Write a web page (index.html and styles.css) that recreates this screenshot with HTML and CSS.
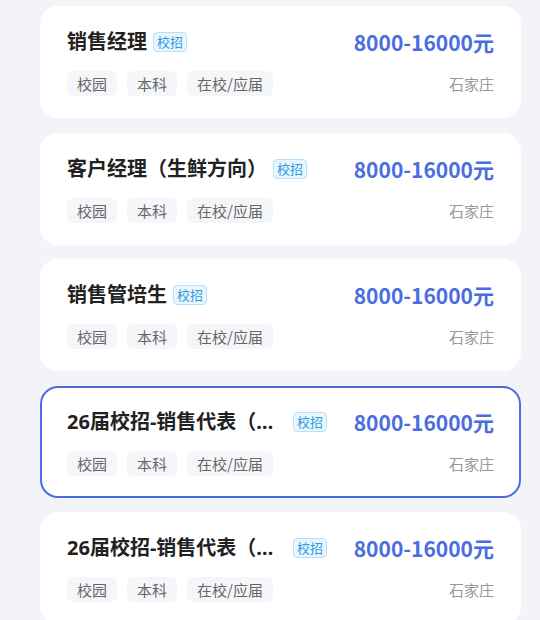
FILE: index.html
```html
<!DOCTYPE html>
<html lang="zh-CN">
<head>
    <meta charset="UTF-8">
    <meta name="viewport" content="width=device-width, initial-scale=1.0">
    <title>职位列表</title>
    <link rel="stylesheet" href="styles.css">
</head>
<body>
    <div class="list">
        <div class="job">
            <div class="row">
                <div class="name"><span class="title">销售经理</span><span class="badge">校招</span></div>
                <span class="salary">8000-16000元</span>
            </div>
            <div class="row">
                <div class="tags"><span class="tag">校园</span><span class="tag">本科</span><span class="tag">在校/应届</span></div>
                <span class="city">石家庄</span>
            </div>
        </div>
        <div class="job">
            <div class="row">
                <div class="name"><span class="title">客户经理（生鲜方向）</span><span class="badge">校招</span></div>
                <span class="salary">8000-16000元</span>
            </div>
            <div class="row">
                <div class="tags"><span class="tag">校园</span><span class="tag">本科</span><span class="tag">在校/应届</span></div>
                <span class="city">石家庄</span>
            </div>
        </div>
        <div class="job">
            <div class="row">
                <div class="name"><span class="title">销售管培生</span><span class="badge">校招</span></div>
                <span class="salary">8000-16000元</span>
            </div>
            <div class="row">
                <div class="tags"><span class="tag">校园</span><span class="tag">本科</span><span class="tag">在校/应届</span></div>
                <span class="city">石家庄</span>
            </div>
        </div>
        <div class="job active">
            <div class="row">
                <div class="name"><span class="title">26届校招-销售代表（生鲜方向）</span><span class="badge">校招</span></div>
                <span class="salary">8000-16000元</span>
            </div>
            <div class="row">
                <div class="tags"><span class="tag">校园</span><span class="tag">本科</span><span class="tag">在校/应届</span></div>
                <span class="city">石家庄</span>
            </div>
        </div>
        <div class="job">
            <div class="row">
                <div class="name"><span class="title">26届校招-销售代表（冻品方向）</span><span class="badge">校招</span></div>
                <span class="salary">8000-16000元</span>
            </div>
            <div class="row">
                <div class="tags"><span class="tag">校园</span><span class="tag">本科</span><span class="tag">在校/应届</span></div>
                <span class="city">石家庄</span>
            </div>
        </div>
    </div>
</body>
</html>
```

FILE: styles.css
```css
body { margin: 0; background: #f3f4fa; font-family: "Noto Sans CJK SC", "Noto Sans", sans-serif; }
.list { display: flex; flex-direction: column; gap: 14.5px; padding: 6px 19px 0 40px; }
.job { background: #fff; border-radius: 18px; height: 112px; box-sizing: border-box; padding: 20px 25px 0 25px; border: 2px solid transparent; }
.job.active { border-color: #4a6ee0; }
.row { display: flex; justify-content: space-between; align-items: center; }
.row + .row { margin-top: 15px; }
.name { display: flex; align-items: center; gap: 6px; min-width: 0; }
.title { font-family: "Noto Sans", "Noto Sans CJK SC", sans-serif; font-size: 20px; font-weight: bold; color: #222; max-width: 220px; white-space: nowrap; overflow: hidden; text-overflow: ellipsis; line-height: 28px; }
.badge { font-size: 13px; color: #2a9be0; background: #eaf6fd; border: 1px solid #b9e0f7; border-radius: 4px; padding: 0 3px; line-height: 18px; }
.salary { font-size: 21px; font-weight: bold; color: #4a6ee0; line-height: 28px; }
.tags { display: flex; gap: 10px; }
.tag { font-size: 15px; color: #666; background: #f5f6fa; border-radius: 6px; padding: 0 10px; line-height: 25px; }
.city { font-size: 15px; color: #999; }
```
